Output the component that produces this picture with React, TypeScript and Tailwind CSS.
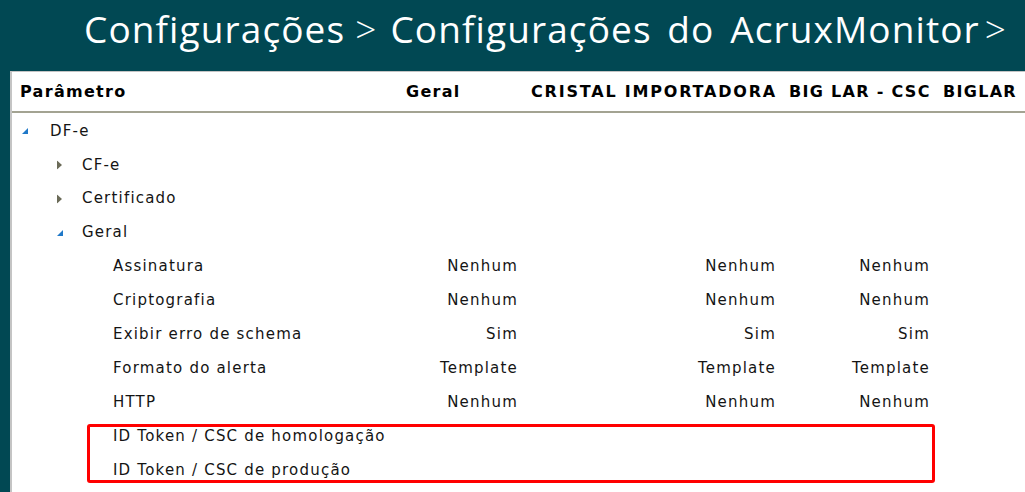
import React from 'react';

type Row = {
    label: string;
    level: number;
    toggle?: 'open' | 'closed';
    values?: [string, string, string];
};

const rows: Row[] = [
    { label: 'DF-e', level: 0, toggle: 'open' },
    { label: 'CF-e', level: 1, toggle: 'closed' },
    { label: 'Certificado', level: 1, toggle: 'closed' },
    { label: 'Geral', level: 1, toggle: 'open' },
    { label: 'Assinatura', level: 2, values: ['Nenhum', 'Nenhum', 'Nenhum'] },
    { label: 'Criptografia', level: 2, values: ['Nenhum', 'Nenhum', 'Nenhum'] },
    { label: 'Exibir erro de schema', level: 2, values: ['Sim', 'Sim', 'Sim'] },
    { label: 'Formato do alerta', level: 2, values: ['Template', 'Template', 'Template'] },
    { label: 'HTTP', level: 2, values: ['Nenhum', 'Nenhum', 'Nenhum'] },
    { label: 'ID Token / CSC de homologação', level: 2 },
    { label: 'ID Token / CSC de produção', level: 2 },
];

const levelPad = ['pl-[38px]', 'pl-[70px]', 'pl-[101px]'];

const Toggle: React.FC<{ state: 'open' | 'closed' }> = ({ state }) =>
    state === 'open' ? (
        <svg width="6" height="6" viewBox="0 0 6 6" className="shrink-0">
            <polygon points="6,0 6,6 0,6" fill="#1f78c8" />
        </svg>
    ) : (
        <svg width="5" height="9" viewBox="0 0 5 9" className="shrink-0">
            <polygon points="0,0 5,4.5 0,9" fill="#6b6b58" />
        </svg>
    );

const cols = 'grid grid-cols-[388px_124px_257px_156px_1fr]';

export default function App() {
    return (
        <div className="relative w-[1025px] h-[492px] overflow-hidden bg-[#014853] flex flex-col font-[DejaVu_Sans,Verdana,sans-serif]">
            <div className="h-[71px] shrink-0 pl-[84px] pt-[1px] text-white text-[37px] leading-[56px] font-[Open_Sans,sans-serif] tracking-[1.1px] [word-spacing:5px] whitespace-nowrap">
                <span>Configurações</span>
                <span className="ml-[10px] font-light">&gt;</span>
                <span className="ml-[13px]">Configurações do AcruxMonitor</span>
                <span className="ml-[5px] font-light">&gt;</span>
            </div>
            <div className="flex-1 ml-[10px] bg-white border-l-2 border-t border-[#c4c4c4]">
                <div className={`${cols} h-[41px] items-center border-b-2 border-[#a3a392] text-[16px] tracking-[1.3px] font-bold text-black whitespace-nowrap`}>
                    <div className="pl-[8px]">Parâmetro</div>
                    <div className="pl-[6px]">Geral</div>
                    <div className="pl-[7px] tracking-[1.8px]">CRISTAL IMPORTADORA</div>
                    <div className="pl-[8px]">BIG LAR - CSC</div>
                    <div className="pl-[6px]">BIGLAR</div>
                </div>
                <div className="pt-[1px]">
                    {rows.map((r) => (
                        <div key={r.label} className={`${cols} h-[33.9px] items-center text-[15px] tracking-[1.2px] text-[#141414] whitespace-nowrap`}>
                            <div className={`relative ${levelPad[r.level]}`}>
                                {r.toggle && (
                                    <span className={`absolute top-1/2 -translate-y-1/2 flex ${r.level === 0 ? 'left-[10px]' : 'left-[45px]'}`}>
                                        <Toggle state={r.toggle} />
                                    </span>
                                )}
                                {r.label}
                            </div>
                            <div className="text-right pr-[6px]">{r.values?.[0]}</div>
                            <div className="text-right pr-[5px]">{r.values?.[1]}</div>
                            <div className="text-right pr-[7px]">{r.values?.[2]}</div>
                            <div />
                        </div>
                    ))}
                </div>
            </div>
            <div className="absolute left-[87px] top-[424px] w-[848px] h-[59px] border-[3px] border-[#ff0000] rounded-[3px]" />
        </div>
    );
}
